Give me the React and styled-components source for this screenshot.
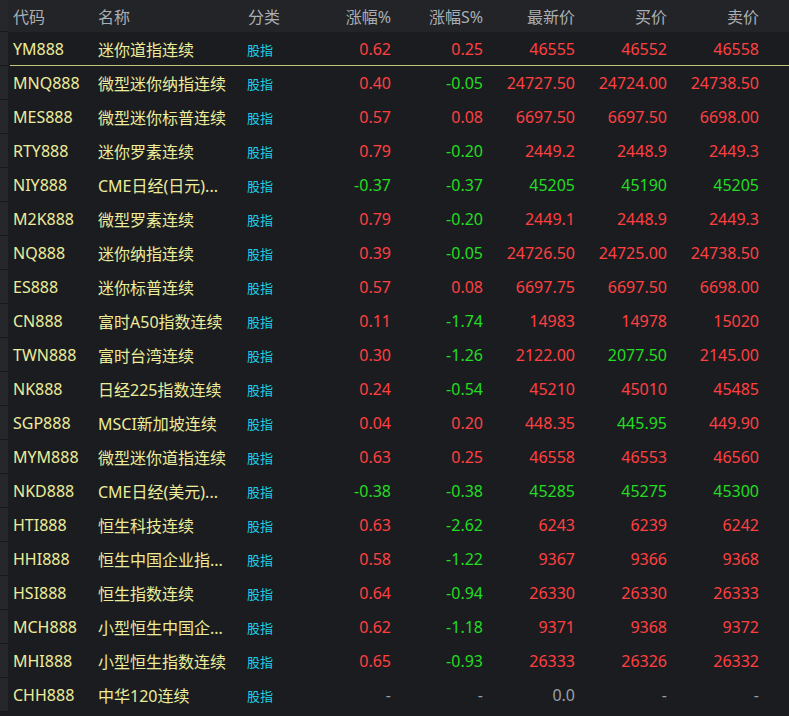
import React from 'react';
import styled, { createGlobalStyle } from 'styled-components';

const Global = createGlobalStyle`
  body { margin: 0; background: #1b1c20; font-family: "Noto Sans", "Noto Sans CJK SC", sans-serif; }
`;

const COLS = '8px 85px 149px 58px 91px 92px 92px 92px 92px 30px';

const Table = styled.div`
  width: 789px;
  height: 716px;
  background: #1b1c20;
  overflow: hidden;
`;

const Header = styled.div`
  display: grid;
  grid-template-columns: ${COLS};
  height: 32px;
  align-items: center;
  background: #232427;
  color: #a9afb5;
  font-size: 16px;
`;

const Row = styled.div`
  display: grid;
  grid-template-columns: ${COLS};
  height: 34px;
  align-items: center;
  font-size: 16px;
  position: relative;
  ${({ $selected }) => $selected && `
    &::after {
      content: '';
      position: absolute;
      left: 10px; right: 0; bottom: 0;
      height: 1px;
      background: #c8c27a;
    }
  `}
`;

const Strip = styled.div`
  height: 100%;
  background: #26272a;
  border-bottom: 1px solid #18191c;
  box-sizing: border-box;
`;

const Cell = styled.div`
  padding-left: ${({ $pl }) => $pl ?? 0}px;
  text-align: ${({ $right }) => ($right ? 'right' : 'left')};
  white-space: nowrap;
  overflow: hidden;
  color: ${({ $color }) => $color || 'inherit'};
  font-size: ${({ $small }) => ($small ? '13px' : '16px')};
`;

const YEL = '#ecec9a';
const RED = '#ff4040';
const GRN = '#22dd22';
const CYAN = '#1ed0e6';
const GRAY = '#9aa0a6';

const data = [
  ['YM888', '迷你道指连续', '0.62', '0.25', '46555', '46552', '46558'],
  ['MNQ888', '微型迷你纳指连续', '0.40', '-0.05', '24727.50', '24724.00', '24738.50'],
  ['MES888', '微型迷你标普连续', '0.57', '0.08', '6697.50', '6697.50', '6698.00'],
  ['RTY888', '迷你罗素连续', '0.79', '-0.20', '2449.2', '2448.9', '2449.3'],
  ['NIY888', 'CME日经(日元)...', '-0.37', '-0.37', '45205', '45190', '45205'],
  ['M2K888', '微型罗素连续', '0.79', '-0.20', '2449.1', '2448.9', '2449.3'],
  ['NQ888', '迷你纳指连续', '0.39', '-0.05', '24726.50', '24725.00', '24738.50'],
  ['ES888', '迷你标普连续', '0.57', '0.08', '6697.75', '6697.50', '6698.00'],
  ['CN888', '富时A50指数连续', '0.11', '-1.74', '14983', '14978', '15020'],
  ['TWN888', '富时台湾连续', '0.30', '-1.26', '2122.00', '2077.50', '2145.00'],
  ['NK888', '日经225指数连续', '0.24', '-0.54', '45210', '45010', '45485'],
  ['SGP888', 'MSCI新加坡连续', '0.04', '0.20', '448.35', '445.95', '449.90'],
  ['MYM888', '微型迷你道指连续', '0.63', '0.25', '46558', '46553', '46560'],
  ['NKD888', 'CME日经(美元)...', '-0.38', '-0.38', '45285', '45275', '45300'],
  ['HTI888', '恒生科技连续', '0.63', '-2.62', '6243', '6239', '6242'],
  ['HHI888', '恒生中国企业指...', '0.58', '-1.22', '9367', '9366', '9368'],
  ['HSI888', '恒生指数连续', '0.64', '-0.94', '26330', '26330', '26333'],
  ['MCH888', '小型恒生中国企...', '0.62', '-1.18', '9371', '9368', '9372'],
  ['MHI888', '小型恒生指数连续', '0.65', '-0.93', '26333', '26326', '26332'],
  ['CHH888', '中华120连续', '-', '-', '0.0', '-', '-'],
];

const sign = (v) => (v === '-' ? GRAY : v.startsWith('-') ? GRN : RED);

const priceColor = (row, v, isLast) => {
  if (v === '-') return GRAY;
  if (row[0] === 'CHH888') return GRAY;
  if (row[2].startsWith('-')) return GRN;
  if (row[0] === 'TWN888' && v === '2077.50') return GRN;
  if (row[0] === 'SGP888' && v === '445.95') return GRN;
  return RED;
};

export default function App() {
  return (
    <Table>
      <Global />
      <Header>
        <Strip />
        <Cell $pl={5}>代码</Cell>
        <Cell $pl={5}>名称</Cell>
        <Cell $pl={6}>分类</Cell>
        <Cell $right>涨幅%</Cell>
        <Cell $right>涨幅S%</Cell>
        <Cell $right>最新价</Cell>
        <Cell $right>买价</Cell>
        <Cell $right>卖价</Cell>
        <div />
      </Header>
      {data.map((r, i) => (
        <Row key={r[0]} $selected={i === 0}>
          <Strip />
          <Cell $pl={5} $color={YEL}>{r[0]}</Cell>
          <Cell $pl={5} $color={YEL}>{r[1]}</Cell>
          <Cell $pl={5} $color={CYAN} $small>股指</Cell>
          <Cell $right $color={sign(r[2])}>{r[2]}</Cell>
          <Cell $right $color={sign(r[3])}>{r[3]}</Cell>
          <Cell $right $color={priceColor(r, r[4])}>{r[4]}</Cell>
          <Cell $right $color={priceColor(r, r[5])}>{r[5]}</Cell>
          <Cell $right $color={priceColor(r, r[6])}>{r[6]}</Cell>
          <div />
        </Row>
      ))}
    </Table>
  );
}
